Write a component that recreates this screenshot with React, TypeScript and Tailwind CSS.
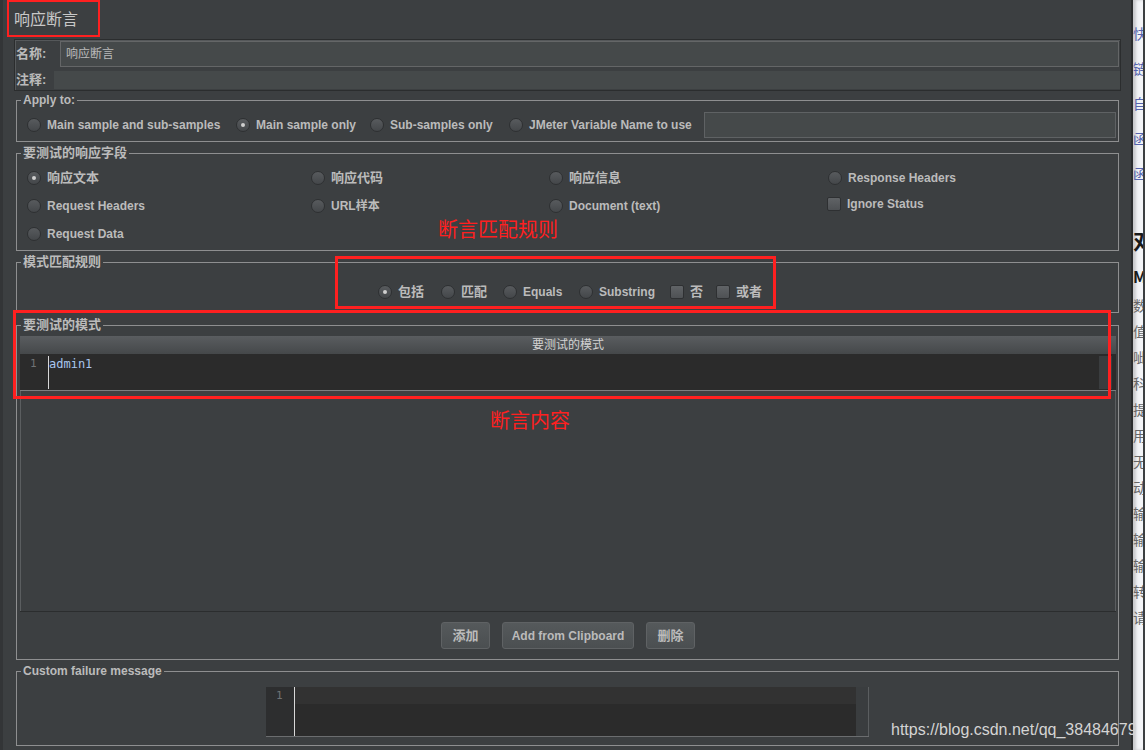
function Radio({ on }: { on?: boolean }) {
  return (
    <span className="flex size-[14px] shrink-0 items-center justify-center rounded-full border border-[#2e3032] bg-linear-to-b from-[#585b5e] to-[#44474a]">
      {on && <span className="size-[4px] rounded-full bg-[#cfcfcf]" />}
    </span>
  );
}

function Check() {
  return <span className="size-[14px] shrink-0 rounded-[2px] border border-[#2e3032] bg-linear-to-b from-[#606366] to-[#4e5154]" />;
}

function Opt({ on, label, cjk, w, box }: { on?: boolean; label: string; cjk?: boolean; w?: string; box?: boolean }) {
  return (
    <div className={`flex h-[28px] shrink-0 items-center gap-[6px] ${w ?? ""}`}>
      {box ? <Check /> : <Radio on={on} />}
      <span className={`font-bold whitespace-nowrap text-[#bbbbbb] ${cjk ? "text-[13px]" : "text-[12px]"}`}>{label}</span>
    </div>
  );
}

function Group({ title, cjk, className, children }: { title: string; cjk?: boolean; className?: string; children: React.ReactNode }) {
  return (
    <div className={`ml-[2px] w-[1103px] border border-[#8e8f90] ${className ?? ""}`}>
      <div className={`-mt-[8px] ml-[4px] w-fit bg-[#3c3f41] px-[2px] font-bold leading-[14px] text-[#bbbbbb] ${cjk ? "text-[13px]" : "text-[12px]"}`}>
        {title}
      </div>
      {children}
    </div>
  );
}

function NamePanel() {
  return (
    <div className="flex h-[52px] w-[1107px] flex-col border border-[#2b2d2e] shadow-[inset_1px_1px_0_#55585a]">
      <div className="mt-[1px] flex h-[26px] items-center">
        <span className="w-[45px] pl-[1px] text-[13px] font-bold text-[#bbbbbb]">名称:</span>
        <div className="flex h-[26px] flex-1 items-center border border-[#646667] bg-[#45494a] pl-[5px] text-[12px] text-[#bbbbbb]">
          响应断言
        </div>
        <span className="w-[1px]" />
      </div>
      <div className="mt-[4px] flex h-[18px] items-center">
        <span className="w-[39px] pl-[1px] text-[13px] font-bold text-[#bbbbbb]">注释:</span>
        <div className="h-[18px] flex-1 bg-[#45494a]" />
      </div>
    </div>
  );
}

function PatternPane() {
  return (
    <div className="ml-[3px] mt-[4px] flex h-[276px] w-[1096px] flex-col border-b border-[#2b2d2e] shadow-[inset_1px_0_0_#5b5e60,inset_-1px_0_0_#5b5e60]">
      <div className="h-[18px] bg-linear-to-b from-[#5a5d60] to-[#45484a] text-center text-[12px] leading-[18px] text-[#d2d2d2]">
        要测试的模式
      </div>
      <div className="flex h-[36px] bg-[#2b2b2b] font-['DejaVu_Sans_Mono','Liberation_Mono',monospace] text-[12px]">
        <div className="w-[28px] pl-[10px] pt-[2px] text-[11px] text-[#6f7274]">1</div>
        <div className="mt-[2px] mb-[1px] w-[1px] bg-[#d8d8d8]" />
        <div className="flex-1 pt-[1px] text-[#a9c6ee]">admin1</div>
        <div className="mt-[2px] mb-[1px] mr-[4px] w-[13px] bg-[#3a3d3f]" />
      </div>
      <div className="h-[1px] bg-[#7b7d7f]" />
      <div className="flex-1" />
    </div>
  );
}

function Btn({ label, w, cjk }: { label: string; w: string; cjk?: boolean }) {
  return (
    <div
      className={`flex h-[27px] items-center justify-center rounded-[3px] border border-[#5f6264] bg-linear-to-b from-[#55595b] to-[#4b4f51] font-bold text-[#bbbbbb] ${w} ${cjk ? "text-[13px]" : "text-[12px]"}`}
    >
      {label}
    </div>
  );
}

function FailureEditor() {
  return (
    <div className="mx-auto mt-[9px] flex h-[50px] w-[603px] border-b border-[#6b6d6f] font-['DejaVu_Sans_Mono','Liberation_Mono',monospace]">
      <div className="w-[28px] bg-[#2d2e2f] pl-[10px] pt-[1px] text-[11px] text-[#6f7274]">1</div>
      <div className="w-[1px] bg-[#d8d8d8]" />
      <div className="flex flex-1 flex-col">
        <div className="h-[17px] bg-[#323232]" />
        <div className="flex-1 bg-[#2b2b2b]" />
      </div>
      <div className="w-[13px] bg-[#3a3d3f] shadow-[inset_-1px_0_0_#5b5e60]" />
    </div>
  );
}

function BlogStrip() {
  const links = ["快", "链", "自", "函", "函"];
  const rows = ["数", "值", "呲", "科", "提", "用", "无", "动", "输", "输", "输", "转", "请"];
  return (
    <div className="flex w-[12px] flex-col overflow-hidden border-l-[2px] border-[#2b2d2e] bg-[#f3f4f7] pt-[24px] font-['Noto_Sans_CJK_SC',sans-serif] shadow-[inset_3px_0_3px_#c8c9cc]">
      {links.map((c, i) => (
        <div key={i} className="h-[35px] text-[14px] leading-[18px] whitespace-nowrap text-[#5564ad]">
          {c}
        </div>
      ))}
      <div className="mt-[27px] h-[40px] text-[22px] font-bold leading-[26px] whitespace-nowrap text-[#1a1a1a]">对</div>
      <div className="h-[30px] text-[16px] font-bold leading-[20px] whitespace-nowrap text-[#1a1a1a]">Ma</div>
      {rows.map((c, i) => (
        <div key={i} className="h-[26px] text-[14px] leading-[18px] whitespace-nowrap text-[#666666]">
          {c}
        </div>
      ))}
    </div>
  );
}

export default function App() {
  return (
    <div className="relative flex h-[750px] w-[1145px] overflow-hidden bg-[#3c3f41] font-['Liberation_Sans','Noto_Sans_CJK_SC',sans-serif]">
      <div className="flex w-[1131px] flex-col border-l-[3px] border-[#333537] pl-[11px]">
        <div className="flex h-[39px] items-center text-[16px] text-[#c8c8c8]">响应断言</div>
        <NamePanel />

        <Group title="Apply to:" className="mt-[9px] h-[42px]">
          <div className="flex h-[34px] items-center pl-[10px] pt-[2px]">
            <Opt label="Main sample and sub-samples" w="w-[209px]" />
            <Opt label="Main sample only" on w="w-[134px]" />
            <Opt label="Sub-samples only" w="w-[139px]" />
            <Opt label="JMeter Variable Name to use" w="w-[195px]" />
            <div className="h-[26px] w-[412px] border border-[#5f6264] bg-[#45494a]" />
          </div>
        </Group>

        <Group title="要测试的响应字段" cjk className="mt-[11px] h-[98px]">
          <div className="grid grid-cols-[284px_238px_279px_1fr] pl-[10px] pt-[4px]">
            <Opt label="响应文本" cjk on />
            <Opt label="响应代码" cjk />
            <Opt label="响应信息" cjk />
            <Opt label="Response Headers" />
            <Opt label="Request Headers" />
            <Opt label="URL样本" />
            <Opt label="Document (text)" />
            <div className="-mt-[2px] -ml-[1px]">
              <Opt label="Ignore Status" box />
            </div>
            <Opt label="Request Data" />
          </div>
        </Group>

        <Group title="模式匹配规则" cjk className="mt-[11px] h-[51px]">
          <div className="flex pl-[361px] pt-[9px]">
            <Opt label="包括" cjk on w="w-[63px]" />
            <Opt label="匹配" cjk w="w-[62px]" />
            <Opt label="Equals" w="w-[76px]" />
            <Opt label="Substring" w="w-[91px]" />
            <Opt label="否" cjk box w="w-[46px]" />
            <Opt label="或者" cjk box />
          </div>
        </Group>

        <Group title="要测试的模式" cjk className="mt-[12px] h-[335px]">
          <PatternPane />
          <div className="mt-[10px] flex justify-center gap-[12px] pl-[1px]">
            <Btn label="添加" w="w-[49px]" cjk />
            <Btn label="Add from Clipboard" w="w-[132px]" />
            <Btn label="删除" w="w-[49px]" cjk />
          </div>
        </Group>

        <Group title="Custom failure message" className="mt-[11px] h-[75px]">
          <FailureEditor />
        </Group>
      </div>
      <BlogStrip />

      {/* annotations drawn over the screenshot */}
      <div className="absolute left-[7px] top-0 h-[37px] w-[93px] border-[2px] border-[#ff2020]" />
      <div className="absolute left-[335px] top-[256px] h-[53px] w-[441px] border-[3px] border-[#ff2020]" />
      <div className="absolute left-[13px] top-[310px] h-[89px] w-[1098px] border-[3px] border-[#ff2020]" />
      <div className="absolute left-[438px] top-[218px] text-[20px] leading-[24px] text-[#ff2020]">断言匹配规则</div>
      <div className="absolute left-[490px] top-[409px] text-[20px] leading-[24px] text-[#ff2020]">断言内容</div>
      <div className="absolute left-[891px] top-[720px] font-['Liberation_Sans',sans-serif] text-[16px] leading-[20px] text-[#d4d4d4]">
        https://blog.csdn.net/qq_38484679
      </div>
    </div>
  );
}
